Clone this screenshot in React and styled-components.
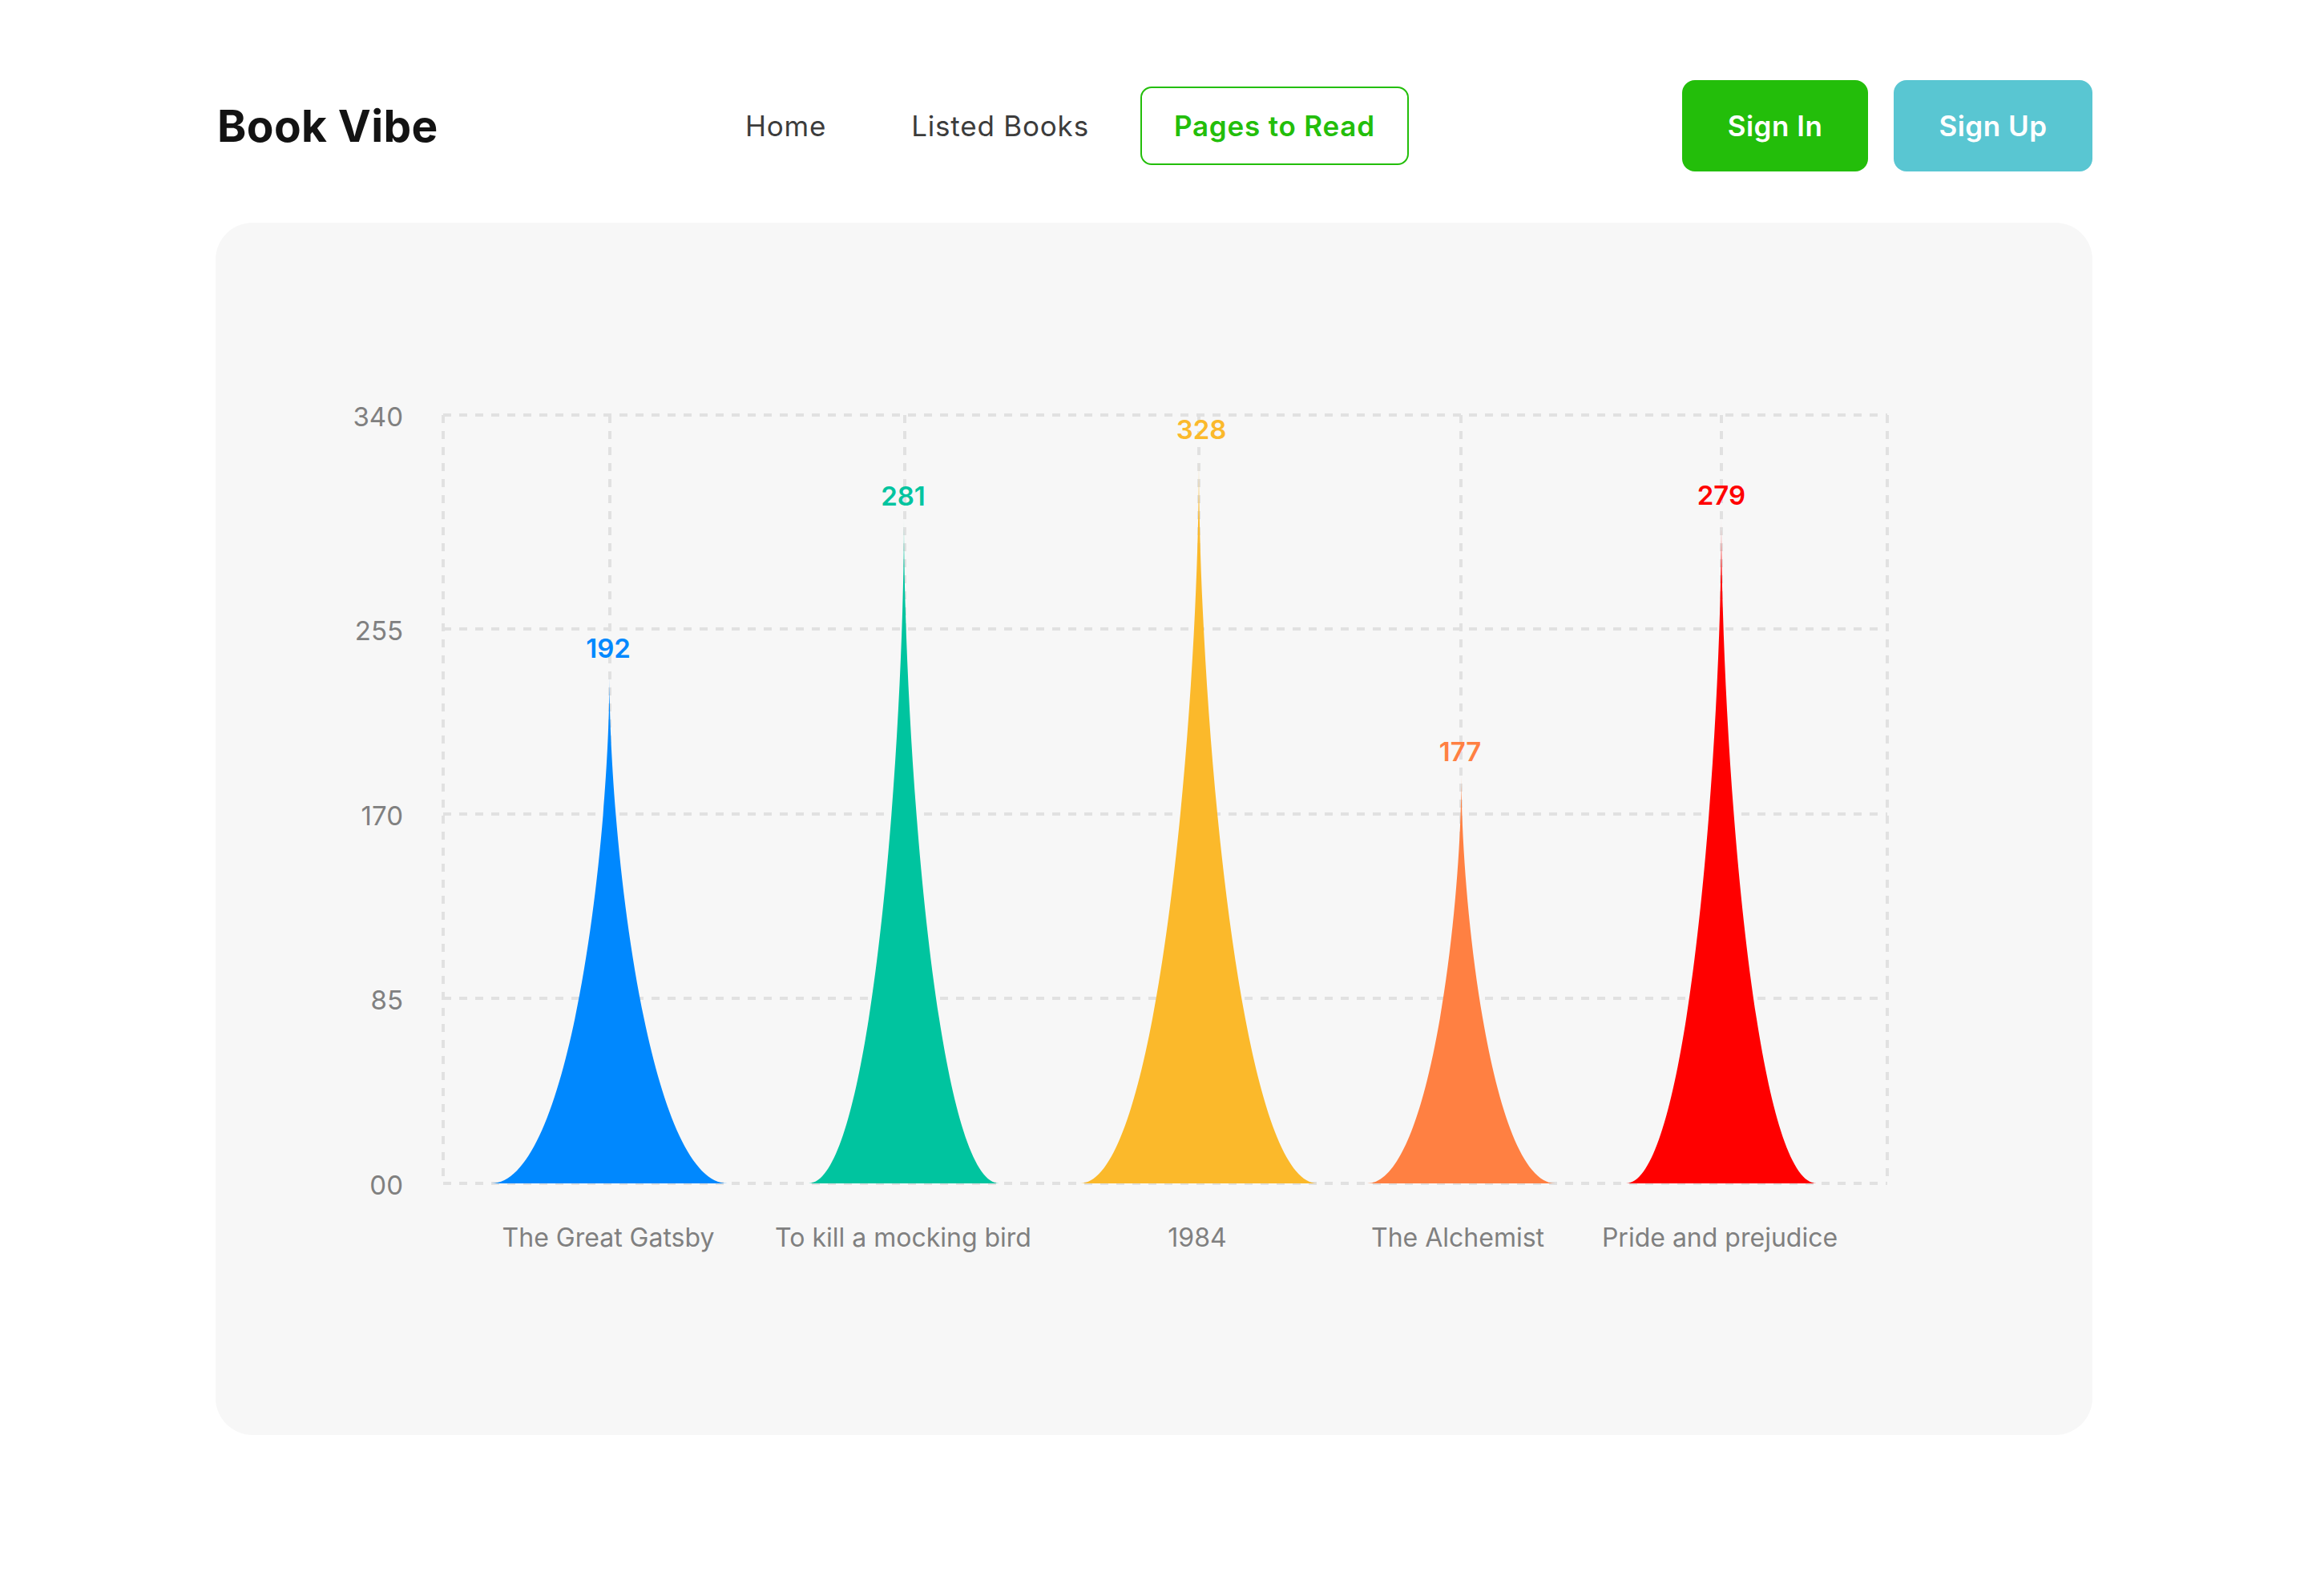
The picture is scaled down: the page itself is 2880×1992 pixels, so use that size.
import React from "react";
import styled, { createGlobalStyle } from "styled-components";

const GlobalStyle = createGlobalStyle`
  body {
    margin: 0;
    background: #fff;
    font-family: Inter, "Open Sans", sans-serif;
  }
`;

const Page = styled.div`
  width: 2342px;
  margin: 0 auto;
  padding-top: 100px;
  padding-bottom: 200px;
`;

const Header = styled.header`
  display: flex;
  align-items: center;
  justify-content: space-between;
  height: 114px;
`;

const Logo = styled.h1`
  margin: 0;
  padding-left: 2px;
  font-size: 55px;
  font-weight: 700;
  color: #131313;
  letter-spacing: 0.4px;
`;

const Nav = styled.nav`
  display: flex;
  align-items: center;
  gap: 22px;
`;

const NavLink = styled.a`
  display: flex;
  align-items: center;
  height: 98px;
  padding: 0 40px;
  box-sizing: border-box;
  font-size: 35px;
  letter-spacing: 0.8px;
  color: ${(p) => (p.$active ? "#23be0a" : "#3c3c3c")};
  font-weight: ${(p) => (p.$active ? 600 : 400)};
  border: 2px solid ${(p) => (p.$active ? "#23be0a" : "transparent")};
  border-radius: 14px;
  text-decoration: none;
  cursor: pointer;
`;

const Actions = styled.div`
  display: flex;
  gap: 32px;
`;

const Button = styled.button`
  height: 114px;
  width: ${(p) => p.$width}px;
  border: none;
  border-radius: 16px;
  background: ${(p) => p.$bg};
  color: #fff;
  font-family: Inter, sans-serif;
  font-size: 35px;
  font-weight: 600;
  letter-spacing: 0.5px;
  cursor: pointer;
`;

const Card = styled.section`
  margin-top: 64px;
  height: 1513px;
  background: #f7f7f7;
  border-radius: 46px;
  overflow: hidden;
`;

const ChartSvg = styled.svg`
  display: block;
  font-family: Inter, sans-serif;
`;

const books = [
  { name: "The Great Gatsby", pages: 192, color: "#0088fe", x: 344, w: 295, top: 566, lx: 490, ly: 543, nx: 490 },
  { name: "To kill a mocking bird", pages: 281, color: "#00c49f", x: 740, w: 238, top: 368, lx: 858, ly: 353, nx: 858 },
  { name: "1984", pages: 328, color: "#fbb92b", x: 1079, w: 296, top: 296, lx: 1230, ly: 270, nx: 1225 },
  { name: "The Alchemist", pages: 177, color: "#ff8042", x: 1437, w: 235, top: 690, lx: 1553, ly: 672, nx: 1550 },
  { name: "Pride and prejudice", pages: 279, color: "#ff0000", x: 1760, w: 238, top: 369, lx: 1879, ly: 352, nx: 1877 },
];

const yTicks = [
  { label: "340", y: 240 },
  { label: "255", y: 507 },
  { label: "170", y: 738 },
  { label: "85", y: 968 },
  { label: "00", y: 1199 },
];

const plot = { left: 284, right: 2086, top: 240, bottom: 1199 };
const vLines = [284, 492, 860, 1227, 1554, 1879, 2086];

function trianglePath(x, w, top, bottom) {
  const h = bottom - top;
  return `M${x},${bottom} C${x + w / 3},${bottom} ${x + w / 2},${top + h / 3} ${x + w / 2},${top}
    C${x + w / 2},${top + h / 3} ${x + (2 * w) / 3},${bottom} ${x + w},${bottom} Z`;
}

function PagesChart() {
  const grid = { stroke: "#e1e1e1", strokeWidth: 4, strokeDasharray: "10 10" };
  return (
    <ChartSvg width="2342" height="1513" viewBox="0 0 2342 1513">
      {yTicks.map((t) => (
        <line key={t.label} x1={plot.left} x2={plot.right} y1={t.y} y2={t.y} {...grid} />
      ))}
      {vLines.map((x) => (
        <line key={x} x1={x} x2={x} y1={plot.top} y2={plot.bottom} {...grid} />
      ))}
      {yTicks.map((t) => (
        <text key={t.label} x="234" y={t.y + 5} textAnchor="end" dominantBaseline="middle" fontSize="33" fill="#808080">
          {t.label}
        </text>
      ))}
      {books.map((b) => (
        <g key={b.name}>
          <path d={trianglePath(b.x, b.w, b.top, plot.bottom)} fill={b.color} />
          <text x={b.lx} y={b.ly} textAnchor="middle" fontSize="33" fontWeight="600" fill={b.color}>
            {b.pages}
          </text>
          <text x={b.nx} y="1278" textAnchor="middle" fontSize="32" fill="#808080">
            {b.name}
          </text>
        </g>
      ))}
    </ChartSvg>
  );
}

export default function App() {
  return (
    <>
      <GlobalStyle />
      <Page>
        <Header>
          <Logo>Book Vibe</Logo>
          <Nav>
            <NavLink>Home</NavLink>
            <NavLink>Listed Books</NavLink>
            <NavLink $active>Pages to Read</NavLink>
          </Nav>
          <Actions>
            <Button $bg="#23be0a" $width={232}>Sign In</Button>
            <Button $bg="#59c6d2" $width={248}>Sign Up</Button>
          </Actions>
        </Header>
        <Card>
          <PagesChart />
        </Card>
      </Page>
    </>
  );
}
